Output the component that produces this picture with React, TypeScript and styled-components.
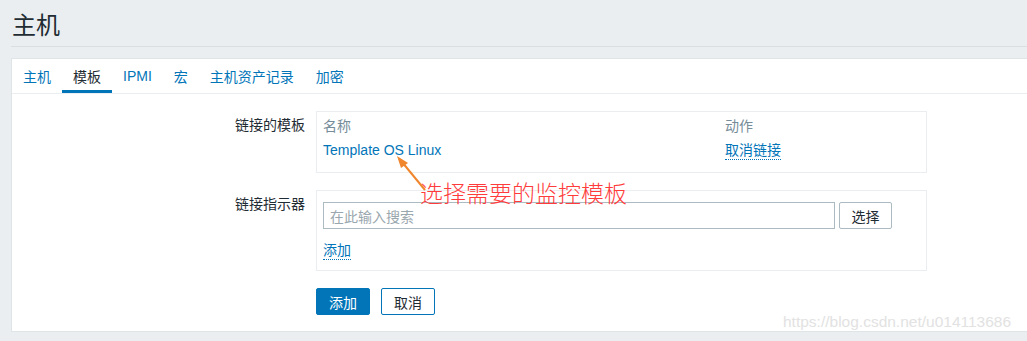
import React from 'react';
import styled, { createGlobalStyle } from 'styled-components';

const GlobalStyle = createGlobalStyle`
  body {
    margin: 0;
    background-color: #ebeef0;
    font-family: "Liberation Sans", Arial, "Noto Sans CJK SC", sans-serif;
    color: #1f2c33;
  }
`;

const Page = styled.div`
  position: relative;
  height: 341px;
  overflow: hidden;
`;

const Header = styled.div`
  margin-left: 11px;
  height: 46px;
  border-bottom: 1px solid #dadee1;
  display: flex;
  align-items: center;
`;

const Title = styled.h1`
  margin: 0 0 0 1px;
  font-size: 24px;
  font-weight: normal;
  color: #1f2c33;
`;

const Panel = styled.div`
  margin: 11px 0 0 11px;
  background-color: #fff;
  border: 1px solid #dfe4e7;
  border-right: none;
  padding-bottom: 16px;
`;

const TabBar = styled.div`
  display: flex;
  height: 34px;
  border-bottom: 1px solid #ebeef0;
`;

const Tab = styled.div<{ $active?: boolean }>`
  display: flex;
  align-items: center;
  padding: 0 11px;
  font-size: 14px;
  color: ${(p) => (p.$active ? '#1f2c33' : '#0275b8')};
  box-shadow: ${(p) => (p.$active ? 'inset 0 -3px 0 #0275b8' : 'none')};
`;

const Form = styled.div`
  display: grid;
  grid-template-columns: 293px 611px;
  column-gap: 11px;
  row-gap: 17px;
  padding-top: 17px;
`;

const Label = styled.div`
  text-align: right;
  font-size: 14px;
  line-height: 18px;
  padding-top: 5px;
`;

const Box = styled.div<{ $pad: string }>`
  border: 1px solid #ebeef0;
  padding: ${(p) => p.$pad};
`;

const LinkedTable = styled.div`
  display: grid;
  grid-template-columns: 402px 1fr;
  font-size: 14px;
`;

const HeadCell = styled.div`
  color: #768d99;
  line-height: 24px;
`;

const Cell = styled.div`
  line-height: 25px;
`;

const Link = styled.span`
  color: #0275b8;
`;

const DottedLink = styled.span`
  color: #0275b8;
  border-bottom: 1px dotted #0275b8;
  line-height: 17px;
  display: inline-block;
`;

const InputRow = styled.div`
  display: flex;
  gap: 4px;
`;

const SearchInput = styled.div`
  width: 512px;
  height: 27px;
  box-sizing: border-box;
  border: 1px solid #acbbc2;
  padding-left: 6px;
  display: flex;
  align-items: center;
  font-size: 14px;
  color: #9aa7ae;
`;

const SelectButton = styled.div`
  width: 53px;
  height: 27px;
  box-sizing: border-box;
  border: 1px solid #acbbc2;
  border-radius: 2px;
  display: flex;
  align-items: center;
  justify-content: center;
  font-size: 14px;
  color: #1f2c33;
`;

const AddRow = styled.div`
  margin-top: 13px;
  font-size: 14px;
`;

const Actions = styled.div`
  grid-column: 2;
  display: flex;
  gap: 11px;
`;

const Button = styled.div<{ $primary?: boolean }>`
  width: 54px;
  height: 27px;
  box-sizing: border-box;
  border-radius: 2px;
  border: 1px solid #0275b8;
  background-color: ${(p) => (p.$primary ? '#0275b8' : '#fff')};
  color: ${(p) => (p.$primary ? '#fff' : '#1f2c33')};
  display: flex;
  align-items: center;
  justify-content: center;
  font-size: 14px;
`;

const Note = styled.div`
  position: absolute;
  left: 420px;
  top: 177px;
  font-family: "Noto Sans CJK SC", sans-serif;
  font-weight: 300;
  font-size: 23px;
  line-height: 30px;
  color: #ff3b3b;
  white-space: nowrap;
`;

const Arrow = styled.svg`
  position: absolute;
  left: 0;
  top: 0;
  pointer-events: none;
`;

const Watermark = styled.div`
  position: absolute;
  left: 783px;
  top: 313px;
  font-size: 15.5px;
  color: #e2e2e2;
  white-space: nowrap;
`;

const tabs = ['主机', '模板', 'IPMI', '宏', '主机资产记录', '加密'];

export default function App() {
  return (
    <Page>
      <GlobalStyle />
      <Header>
        <Title>主机</Title>
      </Header>
      <Panel>
        <TabBar>
          {tabs.map((t) => (
            <Tab key={t} $active={t === '模板'}>
              {t}
            </Tab>
          ))}
        </TabBar>
        <Form>
          <Label>链接的模板</Label>
          <Box $pad="2px 6px 9px">
            <LinkedTable>
              <HeadCell>名称</HeadCell>
              <HeadCell>动作</HeadCell>
              <Cell>
                <Link>Template OS Linux</Link>
              </Cell>
              <Cell>
                <DottedLink>取消链接</DottedLink>
              </Cell>
            </LinkedTable>
          </Box>
          <Label>链接指示器</Label>
          <Box $pad="11px 6px 10px">
            <InputRow>
              <SearchInput>在此输入搜索</SearchInput>
              <SelectButton>选择</SelectButton>
            </InputRow>
            <AddRow>
              <DottedLink>添加</DottedLink>
            </AddRow>
          </Box>
          <Actions>
            <Button $primary>添加</Button>
            <Button>取消</Button>
          </Actions>
        </Form>
      </Panel>
      <Arrow width="1027" height="341">
        <line x1="425" y1="190" x2="402" y2="162" stroke="#f0862e" strokeWidth="2" />
        <polygon points="397,156 408,163 401,168" fill="#f0862e" />
      </Arrow>
      <Note>选择需要的监控模板</Note>
      <Watermark>https://blog.csdn.net/u014113686</Watermark>
    </Page>
  );
}
